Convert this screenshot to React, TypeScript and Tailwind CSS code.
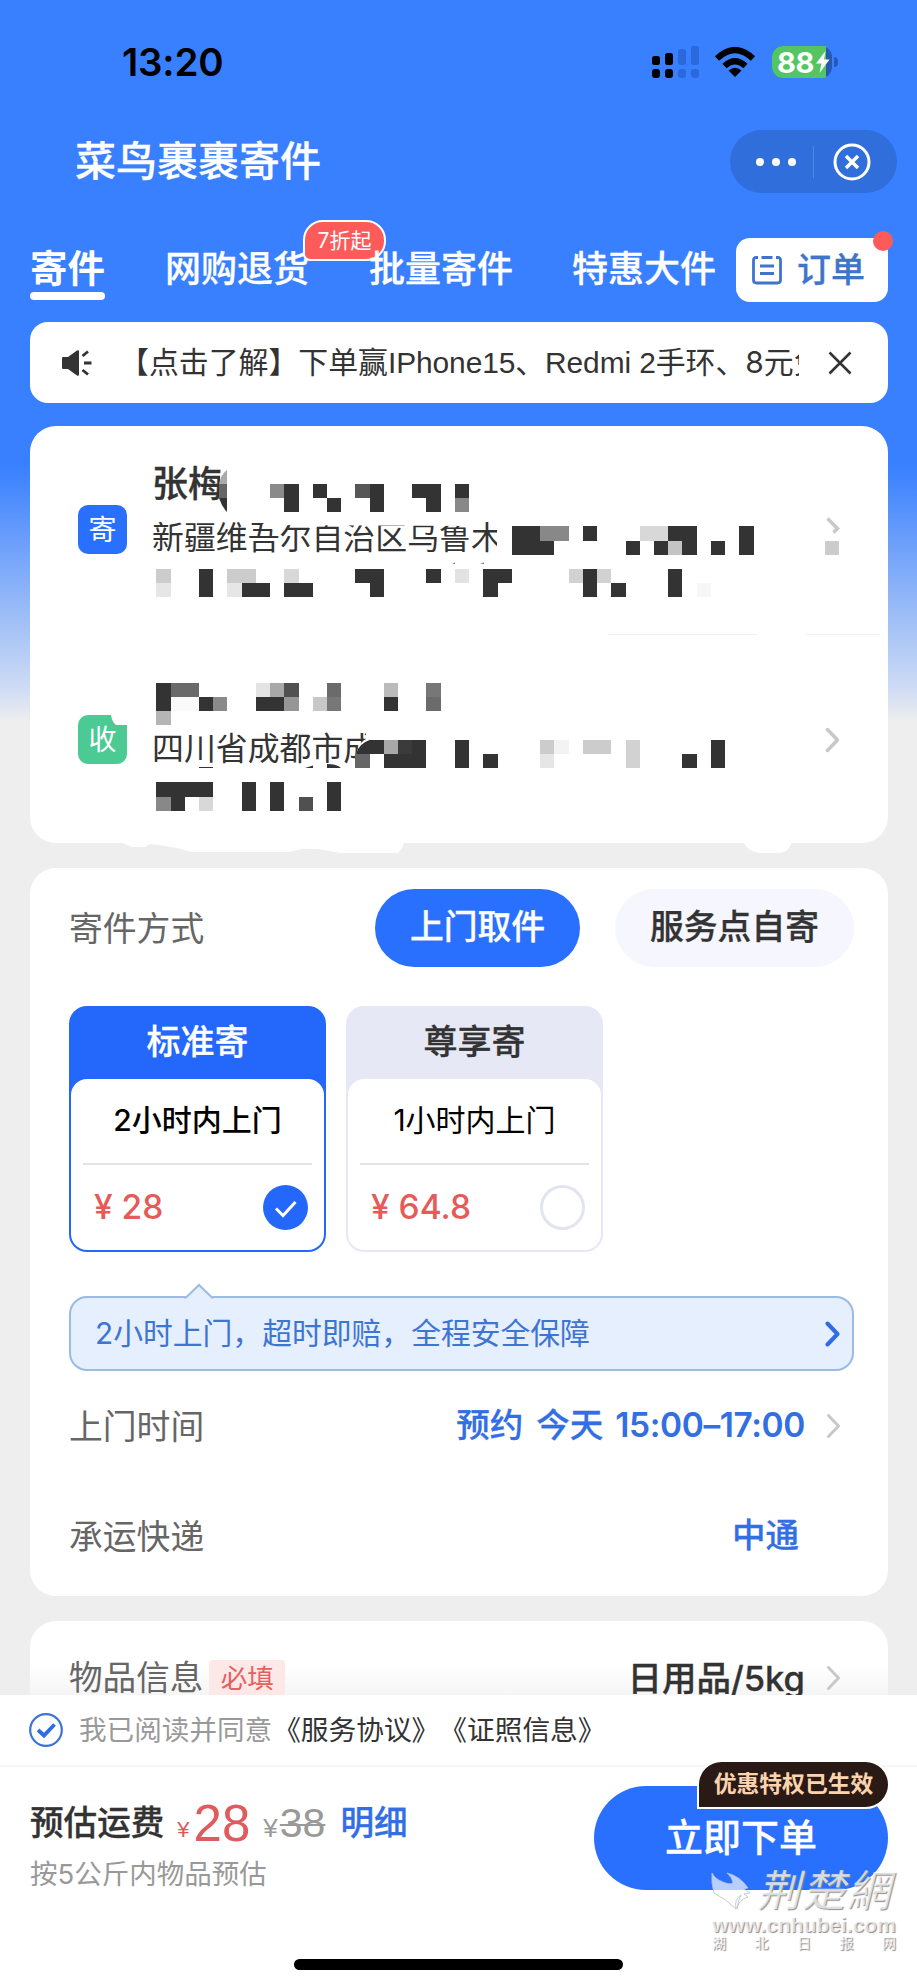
import type { ReactNode } from 'react';

const CELL = 14.22;
const DARK = '#333333';

// [row, column, width in cells, color]
const mosaic: [number, number, number, string][] = [
  [0, 8, 1, '#8a8a8a'], [0, 9, 1, DARK], [0, 11, 1, DARK], [0, 14, 1, '#575757'], [0, 15, 1, DARK],
  [0, 18, 2, DARK], [0, 21, 1, DARK],
  [1, 9, 1, DARK], [1, 12, 1, DARK], [1, 15, 1, DARK], [1, 19, 1, DARK], [1, 21, 1, '#888888'],
  [3, 25, 2, DARK], [3, 27, 2, '#888888'], [3, 30, 1, DARK], [3, 34, 2, '#d8d8d8'], [3, 36, 2, DARK], [3, 41, 1, DARK],
  [4, 25, 3, DARK], [4, 33, 1, DARK], [4, 35, 1, DARK], [4, 36, 1, '#c4c4c4'], [4, 37, 1, DARK],
  [4, 39, 1, DARK], [4, 41, 1, DARK], [4, 47, 1, '#cccccc'],
  [6, 0, 1, '#cccccc'], [6, 3, 1, DARK], [6, 5, 2, '#cccccc'], [6, 9, 1, '#d8d8d8'], [6, 14, 2, DARK],
  [6, 19, 1, DARK], [6, 21, 1, '#e2e2e2'], [6, 23, 2, DARK], [6, 29, 1, '#d2d2d2'], [6, 30, 1, DARK],
  [6, 31, 1, '#d2d2d2'], [6, 36, 1, DARK],
  [7, 0, 1, '#e6e6e6'], [7, 3, 1, DARK], [7, 5, 1, '#e6e6e6'], [7, 6, 2, DARK], [7, 9, 2, DARK],
  [7, 15, 1, DARK], [7, 23, 1, DARK], [7, 30, 1, DARK], [7, 32, 1, DARK], [7, 36, 1, DARK], [7, 38, 1, '#f7f7f7'],
  [14, 0, 1, DARK], [14, 1, 2, '#6a6a6a'], [14, 7, 1, '#e4e4e4'], [14, 8, 1, '#a8a8a8'], [14, 9, 1, '#505050'],
  [14, 12, 1, '#6b6b6b'], [14, 16, 1, '#bbbbbb'], [14, 19, 1, '#777777'],
  [15, 0, 1, DARK], [15, 1, 2, '#fafafa'], [15, 3, 1, DARK], [15, 4, 1, '#8a8a8a'], [15, 7, 2, DARK],
  [15, 9, 1, '#969696'], [15, 11, 1, '#c8c8c8'], [15, 12, 1, '#777777'], [15, 16, 1, DARK], [15, 19, 1, '#6b6b6b'],
  [16, 0, 1, '#b5b5b5'],
  [18, 15, 1, DARK], [18, 16, 1, '#a8a8a8'], [18, 17, 1, '#3b3b3b'], [18, 18, 1, DARK], [18, 21, 1, DARK],
  [18, 27, 1, '#cccccc'], [18, 28, 1, '#f3f3f3'], [18, 30, 2, '#cccccc'], [18, 33, 1, '#d2d2d2'], [18, 39, 1, DARK],
  [19, 14, 1, '#666666'], [19, 16, 3, DARK], [19, 21, 1, DARK], [19, 23, 1, DARK], [19, 27, 1, '#e6e6e6'],
  [19, 33, 1, '#d2d2d2'], [19, 37, 1, DARK], [19, 39, 1, DARK],
  [21, 0, 4, DARK], [21, 6, 1, DARK], [21, 8, 1, DARK], [21, 12, 1, DARK],
  [22, 0, 1, '#888888'], [22, 1, 1, DARK], [22, 3, 1, '#d8d8d8'], [22, 6, 1, DARK], [22, 8, 1, DARK],
  [22, 10, 1, '#505050'], [22, 12, 1, DARK],
];

// Hides the personal details of both addresses
function MosaicLayer() {
  return (
    <svg className="absolute left-0 top-0 pointer-events-none" width="858" height="430" viewBox="30 426 858 430">
      <path d="M275 512H470V526L262 525Z" fill="#fff" />
      <path d="M497 512H512V560H497Z" fill="#fff" />
      <path d="M221 460H236V520H226L219 500Z" fill="#fff" />
      <path d="M227 470V484H219Q221 474 227 470Z" fill="#aaaaaa" />
      <path d="M219 484H227V498H219Z" fill="#666666" />
      <path d="M219 498H227V512Q222 507 219 498Z" fill={DARK} />
      <path d="M366 733L385 733V770H356Q354 745 366 739Z" fill="#fff" />
      <path d="M356 754Q358 744 370 739.7V754Z" fill={DARK} />
      <path d="M199 767H213V768H199Z M305 768L313 765.5V768Z M327 764Q337 764 341 768H327Z" fill={DARK} />
      <path d="M452 563.500L455 562.500V564Z M480 563.500L484 562.500V564Z" fill="#777" />
      {mosaic.map(([row, col, w, color]) => (
        <rect key={`${row}-${col}`} x={156.3 + col * CELL} y={483.7 + row * CELL} width={w * CELL} height={CELL} fill={color} shapeRendering="crispEdges" />
      ))}
      <path d="M120 842L132 847H145L150 844Q172 846 192 852H288L302 849H318L340 853H398Q403 848 404 842Z" fill="#fff" />
      <path d="M743 842Q750 853 760 853H780Q788 853 792 842Z" fill="#fff" />
    </svg>
  );
}

function Chevron({ color = '#c8c8c8', width = 3.5 }: { color?: string; width?: number }) {
  return (
    <svg className="shrink-0" width="16" height="26" viewBox="0 0 16 26" fill="none">
      <path d="M2.5 2.5L12.5 13L2.5 23.5" stroke={color} strokeWidth={width} strokeLinecap="round" strokeLinejoin="round" />
    </svg>
  );
}

function StatusBar() {
  return (
    <div className="h-[124px] shrink-0 flex items-center pl-[122px] pr-[79px] justify-between text-black">
      <span className="text-[38.500px] font-semibold leading-none tracking-[-0.2px]">13:20</span>
      <div className="flex items-center">
        <svg width="48" height="32" viewBox="0 0 48 32">
          <g fill="#000">
            <rect x="0" y="10" width="8" height="9" rx="2.5" />
            <rect x="13" y="7" width="8" height="12" rx="2.5" />
            <rect x="0" y="23" width="8" height="9" rx="3" />
            <rect x="13" y="23" width="8" height="9" rx="3" />
          </g>
          <g fill="#2a69dc">
            <rect x="26" y="3" width="8" height="16" rx="2.5" />
            <rect x="39" y="0" width="8" height="19" rx="2.5" />
            <rect x="26" y="23" width="8" height="9" rx="3" />
            <rect x="39" y="23" width="8" height="9" rx="3" />
          </g>
        </svg>
        <svg className="ml-[14px]" width="42" height="31" viewBox="0 0 42 31">
          <path d="M3 11.5Q21 -5.5 39 11.5M10.5 19Q21 9.500 31.500 19" stroke="#000" strokeWidth="6" fill="none" />
          <path d="M14.500 23.500Q21 18 27.500 23.500L21 30Z" fill="#000" />
        </svg>
        <div className="ml-[16px] flex items-center">
          <div className="w-[60px] h-[32px] rounded-[11px] flex bg-[#2659b4] relative">
            <div className="w-[54px] h-full rounded-l-[11px] bg-[#53c663]" />
            <span className="absolute left-[5px] top-[2px] text-[29px] leading-[29px] font-bold text-white tracking-[-0.5px]">88</span>
            <svg className="absolute left-[44px] top-[5px]" width="14" height="22" viewBox="0 0 14 22">
              <path d="M9.500 0L0 12.500H5.500L3.500 22L13.500 8.500H8Z" fill="#fff" />
            </svg>
          </div>
          <div className="ml-[2px] w-[4px] h-[10px] rounded-r-full bg-[#2659b4]" />
        </div>
      </div>
    </div>
  );
}

function TitleBar() {
  return (
    <div className="h-[75px] shrink-0 flex items-center justify-between pl-[75px] pr-[20px]">
      <h1 className="text-[41px] leading-none font-medium text-white whitespace-nowrap [-webkit-text-stroke:0.3px]">菜鸟裹裹寄件</h1>
      <div className="w-[167px] h-[63px] rounded-full bg-[#2f6edb] flex items-center">
        <div className="flex gap-[8px] ml-[26px]">
          <span className="w-[8px] h-[8px] rounded-full bg-white" />
          <span className="w-[8px] h-[8px] rounded-full bg-white" />
          <span className="w-[8px] h-[8px] rounded-full bg-white" />
        </div>
        <span className="ml-[17px] w-px h-[32px] bg-[#4f88e8]" />
        <svg className="ml-[19px]" width="38" height="38" viewBox="0 0 38 38" fill="none" stroke="#fff">
          <circle cx="19" cy="19" r="17" strokeWidth="3" />
          <path d="M13 13L25 25M25 13L13 25" strokeWidth="3.500" />
        </svg>
      </div>
    </div>
  );
}

function Tabs() {
  return (
    <nav className="h-[123px] shrink-0 flex items-start pl-[30px] text-white font-medium whitespace-nowrap [-webkit-text-stroke:0.3px]">
      <div className="mt-[49px] w-[75px]">
        <div className="h-[42px] flex items-center text-[37.5px] font-bold leading-none [-webkit-text-stroke:0px]">寄件</div>
        <div className="mt-[2px] h-[8px] rounded-full bg-white" />
      </div>
      <div className="relative ml-[60px] mt-[49px] h-[42px] w-[144px] flex items-center text-[36px] leading-none">
        网购退货
        <span className="absolute left-[138px] top-[-28px] w-[83px] h-[41px] rounded-[20px] rounded-bl-[7px] border-2 border-white bg-[#fc5b59] flex items-center justify-center text-[21px] font-normal leading-none [-webkit-text-stroke:0px]">
          7折起
        </span>
      </div>
      <div className="relative ml-[60px] mt-[49px] h-[42px] w-[144px] flex items-center text-[36px] leading-none">批量寄件</div>
      <div className="ml-[59px] mt-[49px] h-[42px] w-[144px] flex items-center text-[36px] leading-none">特惠大件</div>
      <button className="relative ml-[20px] mt-[39px] w-[152px] h-[64px] rounded-[14px] bg-white flex items-center text-[#3f74cc]">
        <svg className="ml-[16px]" width="30" height="30" viewBox="0 0 30 30" fill="none" stroke="#3f74cc" strokeWidth="2.800">
          <path d="M6 2.500H4Q1.500 2.500 1.500 5V25Q1.500 28 4.500 28H25.500Q28.500 28 28.500 25V5Q28.500 2.500 26 2.500H24M9.500 2.500H20.500" />
          <path d="M8 11H22M8 18.500H22" />
        </svg>
        <span className="ml-[15px] text-[34px] leading-none font-medium">订单</span>
        <span className="absolute right-[-5px] top-[-7px] w-[20px] h-[20px] rounded-full bg-[#fc5b59]" />
      </button>
    </nav>
  );
}

function Notice() {
  return (
    <div className="ml-[30px] mr-[29px] h-[81px] shrink-0 rounded-[18px] bg-white flex items-center text-[#333]">
      <svg className="ml-[32px] shrink-0" width="30" height="26" viewBox="0 0 30 26">
        <path d="M0 8Q0 7 1 7H6L15 0.500Q17 -0.500 17 1.500V24.500Q17 26.500 15 25.500L6 19H1Q0 19 0 18Z" fill="#333" />
        <path d="M20.500 6L26 1.500M22 13H29.500M20.500 20L26 24.500" stroke="#333" strokeWidth="2.800" />
      </svg>
      <p className="ml-[27px] w-[680px] overflow-hidden whitespace-nowrap text-[29.900px] leading-[40px] text-[#333]">
        【点击了解】下单赢<span className="font-['Liberation_Sans'] tracking-[-0.1px]">IPhone15</span>、<span className="font-['Liberation_Sans'] tracking-[-0.1px]">Redmi 2</span>手环、8元免
      </p>
      <svg className="ml-[29px] shrink-0" width="24" height="24" viewBox="0 0 24 24" stroke="#333" strokeWidth="2.500">
        <path d="M1.500 1.500L22.500 22.500M22.500 1.500L1.500 22.500" />
      </svg>
    </div>
  );
}

function AddressCard() {
  return (
    <section className="relative mt-[23px] ml-[30px] w-[858px] h-[417px] shrink-0 rounded-[26px] bg-white text-[#333] whitespace-nowrap">
      <div className="h-[208px] flex items-start pl-[48px] pr-[47px]">
        <div className="mt-[79px] w-[49px] h-[49px] rounded-[10px] bg-[#2970ff] text-white text-[28px] leading-none flex items-center justify-center">寄</div>
        <div className="ml-[25px] mt-[39px] flex-1">
          <div className="h-[38px] flex items-center text-[36px] leading-none font-medium [-webkit-text-stroke:0.3px]">张梅</div>
          <div className="mt-[18px] h-[34px] flex items-center text-[31.900px] leading-none">新疆维吾尔自治区乌鲁木</div>
        </div>
        <svg className="mt-[90px]" width="16" height="19" viewBox="0 0 16 19" fill="none">
          <path d="M2.500 2.500L12.500 12.500L8.500 16.500" stroke="#c8c8c8" strokeWidth="3.500" />
        </svg>
      </div>
      <div className="ml-[578px] mr-[8px] flex gap-[49px]">
        <div className="h-px w-[149px] bg-[#efefef]" />
        <div className="h-px w-[74px] bg-[#f4f4f4]" />
      </div>
      <div className="h-[208px] flex items-start pl-[48px] pr-[47px]">
        <div className="relative mt-[80px] w-[49px] h-[49px] rounded-[10px] bg-[#4bca93] text-white text-[28px] leading-none flex items-center justify-center">
          收
          <svg className="absolute right-0 top-0" width="17" height="11" viewBox="0 0 17 11">
            <path d="M1 0H17V10H6Q2 7 1 0Z" fill="#fff" />
          </svg>
        </div>
        <div className="ml-[25px] mt-[97px] flex-1 h-[34px] flex items-center text-[31.900px] leading-none">四川省成都市成</div>
        <div className="mt-[92px]"><Chevron /></div>
      </div>
      <MosaicLayer />
    </section>
  );
}

interface OptionProps {
  title: string;
  desc: string;
  price: string;
  active?: boolean;
}

function ServiceOption({ title, desc, price, active }: OptionProps) {
  return (
    <div className={`w-[257px] h-[246px] rounded-[18px] p-[2px] flex flex-col ${active ? 'bg-[#2367fb]' : 'bg-[#e7e8f6]'}`}>
      <div className={`h-[71px] flex items-center justify-center text-[34px] leading-none font-medium [-webkit-text-stroke:0.3px] ${active ? 'text-white' : 'text-[#333]'}`}>
        <span className="-mt-[3px]">{title}</span>
      </div>
      <div className="flex-1 rounded-[16px] bg-white px-[12px]">
        <div className={`h-[86px] pb-[3px] flex items-center justify-center text-[30px] leading-none text-black border-b-2 border-[#e4e4e4] ${active ? 'font-medium' : 'font-normal'}`}>
          {desc}
        </div>
        <div className="h-[85px] flex items-center justify-between pl-[11px] pr-[4px]">
          <span className="text-[33.500px] leading-none text-[#e65a58] font-medium">{price}</span>
          {active ? (
            <svg width="45" height="45" viewBox="0 0 45 45">
              <circle cx="22.500" cy="22.500" r="22.500" fill="#2367fb" />
              <path d="M13 23.500L20 30.500L32.500 17" stroke="#fff" strokeWidth="3" fill="none" />
            </svg>
          ) : (
            <div className="w-[45px] h-[45px] rounded-full border-[3px] border-[#e3e4f2]" />
          )}
        </div>
      </div>
    </div>
  );
}

function Row({ label, children }: { label: string; children: ReactNode }) {
  return (
    <div className="flex items-center justify-between">
      <span className="mt-px text-[33.800px] leading-none text-[#666]">{label}</span>
      {children}
    </div>
  );
}

function ServiceCard() {
  return (
    <section className="mt-[25px] ml-[30px] w-[858px] h-[728px] shrink-0 rounded-[26px] bg-white pl-[39px] pr-[34px] whitespace-nowrap">
      <div className="pt-[21px]">
        <Row label="寄件方式">
          <div className="flex gap-[35px] text-[33.800px] leading-none font-medium [-webkit-text-stroke:0.3px]">
            <button className="w-[205px] h-[78px] rounded-full bg-[#2970ff] text-white pb-[3px]">上门取件</button>
            <button className="w-[239px] h-[78px] rounded-full bg-[#f6f6fe] text-[#333] pb-[3px]">服务点自寄</button>
          </div>
        </Row>
      </div>
      <div className="mt-[39px] flex gap-[20px]">
        <ServiceOption title="标准寄" desc="2小时内上门" price="¥ 28" active />
        <ServiceOption title="尊享寄" desc="1小时内上门" price="¥ 64.8" />
      </div>
      <div className="relative mt-[44px] w-[785px] h-[75px] rounded-[18px] border-2 border-[#9bbbe2] bg-[#e5effd] flex items-center justify-between pl-[24px] pr-[11px] text-[29.800px] leading-none text-[#3e74d2]">
        2小时上门，超时即赔，全程安全保障
        <Chevron color="#2f6be8" width={4} />
        <svg className="absolute left-[112px] top-[-15px]" width="32" height="18" viewBox="0 0 32 18">
          <path d="M2 14L16 2L30 14V18H2Z" fill="#e5effd" />
          <path d="M1 14.500H3L16 2L29 14.500H31" stroke="#9bbbe2" strokeWidth="2" fill="none" />
        </svg>
      </div>
      <div className="mt-[20px] h-[70px] flex flex-col justify-center pr-[12px]">
        <Row label="上门时间">
          <div className="flex items-center gap-[21px]">
            <span className="flex items-center text-[33.500px] leading-none font-medium text-[#326fe2] [-webkit-text-stroke:0.3px]">
              <span>预约</span>
              <span className="ml-[13px]">今天</span>
              <span className="ml-[12px] font-semibold tracking-[-0.4px] [-webkit-text-stroke:0px]">15:00–17:00</span>
            </span>
            <Chevron width={3} />
          </div>
        </Row>
      </div>
      <div className="mt-[40px] h-[70px] flex flex-col justify-center pr-[55px]">
        <Row label="承运快递">
          <span className="text-[33.500px] leading-none font-medium text-[#326fe2] [-webkit-text-stroke:0.3px]">中通</span>
        </Row>
      </div>
    </section>
  );
}

function GoodsCard() {
  return (
    <section className="mt-[25px] ml-[30px] w-[858px] h-[74px] shrink-0 overflow-hidden rounded-t-[26px] bg-white bg-linear-to-b from-white from-60% to-[#f5f5f5] whitespace-nowrap">
      <div className="h-[113px] flex items-center pl-[39px] pr-[46px]">
        <span className="text-[33.600px] leading-none text-[#666]">物品信息</span>
        <span className="ml-[6px] w-[76px] h-[38px] mt-[2px] rounded-[4px] bg-[#fde8e8] text-[#e4605e] text-[26.500px] leading-none flex items-center justify-center">必填</span>
        <span className="ml-auto mr-[21px] mt-[4px] text-[34.500px] leading-none font-medium text-[#333] [-webkit-text-stroke:0.3px]">日用品/5kg</span>
        <Chevron width={3} />
      </div>
    </section>
  );
}

function Watermark() {
  return (
    <div className="absolute left-[710px] top-[1866px] w-[190px] text-white/70 whitespace-nowrap pointer-events-none [text-shadow:1px_1px_1px_#8f8f8f]">
      <div className="flex items-start h-[50px]">
        <svg className="mt-[5px] shrink-0" width="42" height="44" viewBox="0 0 42 44">
          <path d="M2 2Q5 8 13 11Q20 14 23 12Q22 6 17 2Q30 5 38 17L34 18L40 22L34 23L38 26Q28 29 27 38Q28 29 31 24Q24 28 26 38Q16 28 4 22Q1 12 2 2Z" fill="#ffffffaa" stroke="#b9bec9" strokeWidth="0.800" />
        </svg>
        <span className="ml-[5px] text-[43px] leading-[43px] italic tracking-[2px] font-['Noto_Sans_CJK_TC'] font-normal">荆楚網</span>
      </div>
      <div className="ml-[2px] w-[184px] text-[21px] leading-[18px] font-bold font-['Liberation_Sans']">
        www.cnhubei.com
      </div>
      <div className="mt-[1px] ml-[2px] w-[184px] flex justify-between text-[14px] leading-[16px] font-medium">
        <span>湖</span><span>北</span><span>日</span><span>报</span><span>网</span>
      </div>
    </div>
  );
}

function Footer() {
  return (
    <footer className="flex-1 bg-white flex flex-col whitespace-nowrap">
      <div className="h-[72px] shrink-0 border-b-2 border-[#f5f5f5] flex items-center pl-[29px]">
        <svg width="34" height="34" viewBox="0 0 34 34" fill="none">
          <circle cx="17" cy="17" r="15.800" stroke="#3b74d6" strokeWidth="2.200" />
          <path d="M9 17L15 22.500L25.500 11.500" stroke="#2f6be6" strokeWidth="3.800" />
        </svg>
        <span className="mt-px ml-[16px] text-[27.600px] leading-none text-[#999]">我已阅读并同意</span>
        <span className="mt-px ml-[1px] text-[27.700px] leading-none text-[#333]">《服务协议》</span>
        <span className="mt-px text-[27.700px] leading-none text-[#333]">《证照信息》</span>
      </div>
      <div className="flex justify-between pl-[30px] pr-[29px]">
        <div>
          <div className="mt-[31px] h-[50px] flex items-center leading-none">
            <span className="text-[33.600px] font-medium text-[#333] [-webkit-text-stroke:0.3px]">预估运费</span>
            <span className="ml-[13px] mt-[14px] text-[22px] text-[#e0555a] font-['Liberation_Sans']">¥</span>
            <span className="ml-[4px] text-[51px] text-[#e05a5e] font-['Liberation_Sans']">28</span>
            <span className="ml-[13px] mt-[10px] text-[26px] text-[#999] font-['Liberation_Sans']">¥</span>
            <span className="ml-[2px] text-[41px] text-[#999] line-through decoration-2 font-['Liberation_Sans']">38</span>
            <span className="ml-[15px] text-[33.600px] font-medium text-[#326fe2] [-webkit-text-stroke:0.3px]">明细</span>
          </div>
          <div className="mt-[12px] h-[30px] flex items-center text-[27.500px] leading-none text-[#999]">按5公斤内物品预估</div>
        </div>
        <button className="relative mt-[19px] w-[294px] h-[104px] rounded-full bg-[#2970ff] text-white text-[38px] leading-none font-medium pb-[2px] [-webkit-text-stroke:0.3px]">
          立即下单
          <span className="absolute right-[-2px] top-[-26px] w-[193px] h-[49px] rounded-full rounded-bl-[4px] border-2 border-white bg-[#2a1a16] text-[#fbd3ac] text-[22.800px] font-bold flex items-center justify-center [-webkit-text-stroke:0px]">
            优惠特权已生效
          </span>
        </button>
      </div>
      <div className="mt-auto mb-[17px] mx-auto w-[329px] h-[11px] rounded-full bg-black" />
    </footer>
  );
}

export default function App() {
  return (
    <div className="relative w-[917px] h-[1987px] overflow-hidden flex flex-col bg-[#eeeeee] bg-[linear-gradient(180deg,#3880ff_0px,#3880ff_465px,#78a6fa_560px,#b4ccf5_650px,#ccdaf5_685px,#eeeeee_722px)] font-['Inter','Noto_Sans_CJK_SC',sans-serif]">
      <StatusBar />
      <TitleBar />
      <Tabs />
      <Notice />
      <AddressCard />
      <ServiceCard />
      <GoodsCard />
      <Footer />
      <Watermark />
    </div>
  );
}
